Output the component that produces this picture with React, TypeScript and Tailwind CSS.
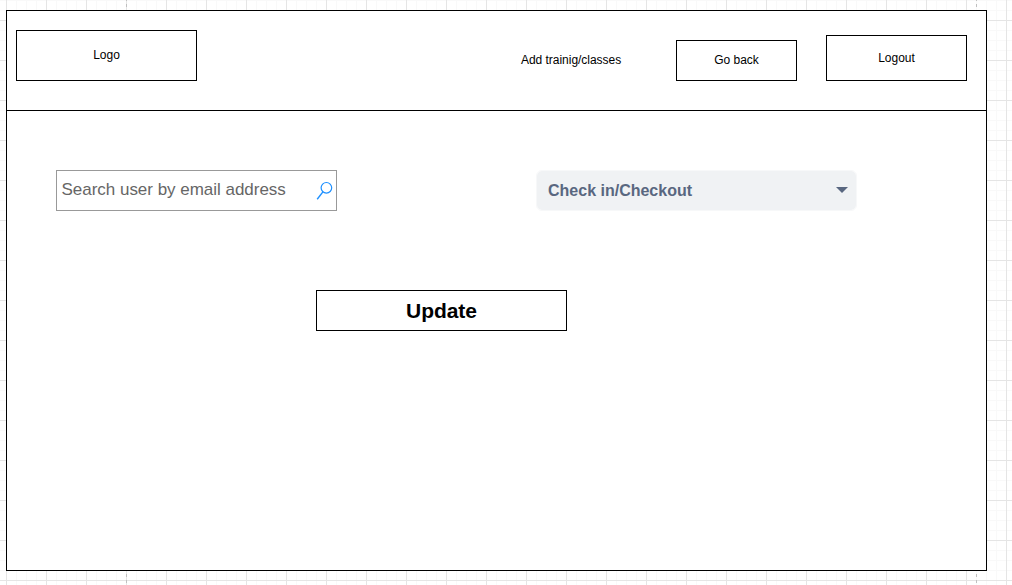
const box = "box-border flex items-center justify-center border border-black bg-white";

function SearchIcon() {
  return (
    <svg width="17" height="20" viewBox="0 0 17 20" fill="none" stroke="#1e90ff" strokeWidth="1.2">
      <circle cx="10.4" cy="6.8" r="5.3" />
      <path d="M6.9 10.9 L1.2 18.3" strokeWidth="1.4" />
    </svg>
  );
}

function GridLines() {
  return (
    <svg className="absolute inset-0" width="1012" height="585" shapeRendering="crispEdges">
      <defs>
        <pattern id="grid" x="6" y="20" width="40" height="40" patternUnits="userSpaceOnUse">
          <path d="M10.5 0V40M20.5 0V40M30.5 0V40M0 10.5H40M0 20.5H40M0 30.5H40" stroke="#f9f9f9" />
          <path d="M0.5 0V40M0 0.5H40" stroke="#e5e5e5" />
        </pattern>
      </defs>
      <rect width="1012" height="585" fill="url(#grid)" />
      <path d="M126.5 0V585M976.5 0V585" stroke="#c0c0c0" strokeDasharray="3 3" strokeDashoffset="2" />
    </svg>
  );
}

export default function App() {
  return (
    <div className="relative h-[585px] w-[1012px] overflow-hidden bg-white pl-[6px] pt-[10px] font-['Liberation_Sans',Arial,sans-serif] text-[12px] text-black">
      <GridLines />
      <div className="relative h-[561px] w-[981px] border border-black bg-white">
        <header className="flex h-[100px] items-start border-b border-black pl-[9px] pt-[19px]">
          <div className={`${box} h-[51px] w-[181px] pb-[2px]`}>Logo</div>
          <a className="ml-[324px] mt-[20px] w-[100px] whitespace-nowrap leading-[20px] tracking-[-0.03px]">Add trainig/classes</a>
          <button className={`${box} ml-[55px] mt-[10px] h-[41px] w-[121px] pb-[2px]`}>Go back</button>
          <button className={`${box} ml-[29px] mt-[5px] h-[46px] w-[141px]`}>Logout</button>
        </header>
        <main className="pt-[59px]">
          <div className="flex pl-[49px]">
            <div className="flex h-[41px] w-[281px] items-center justify-between border border-[#999999] pl-[4.5px] pr-[3px] text-[17px] tracking-[-0.02px] text-[#666666]">
              <span className="whitespace-nowrap pb-[2px]">Search user by email address</span>
              <SearchIcon />
            </div>
            <button className="ml-[199px] flex h-[41px] w-[321px] items-center justify-between rounded-[6px] border border-[#f7f8f9] bg-[#f0f2f4] bg-clip-padding pl-[11px] pr-[8px] text-[16px] font-bold text-[#596780]">
              <span className="pt-[1px]">Check in/Checkout</span>
              <svg className="mb-[1px]" width="12" height="6" viewBox="0 0 12 6" fill="#596780"><path d="M0 0H12L6 6Z" /></svg>
            </button>
          </div>
          <button className={`${box} ml-[309px] mt-[79px] h-[41px] w-[251px] text-[21px] font-bold tracking-[-0.05px]`}>Update</button>
        </main>
      </div>
    </div>
  );
}
